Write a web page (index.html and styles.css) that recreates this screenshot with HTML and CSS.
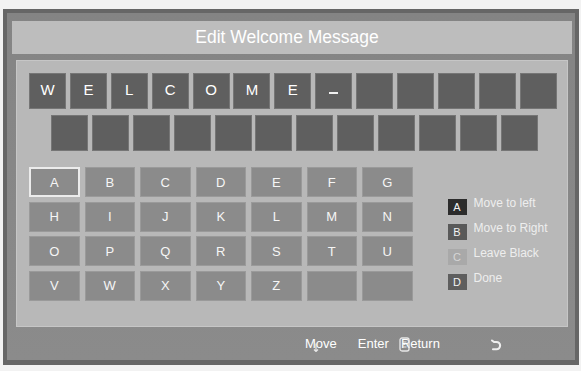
FILE: index.html
```html
<!DOCTYPE html>
<html>
<head>
<meta charset="utf-8">
<link rel="stylesheet" href="styles.css">
</head>
<body>
<div class="frame">
  <div class="title">Edit Welcome Message</div>
  <div class="panel">
    <div class="slots slots-1">
      <div class="slot">W</div><div class="slot">E</div><div class="slot">L</div><div class="slot">C</div><div class="slot">O</div><div class="slot">M</div><div class="slot">E</div><div class="slot"><span class="cursor"></span></div><div class="slot"></div><div class="slot"></div><div class="slot"></div><div class="slot"></div><div class="slot"></div>
    </div>
    <div class="slots slots-2">
      <div class="slot"></div><div class="slot"></div><div class="slot"></div><div class="slot"></div><div class="slot"></div><div class="slot"></div><div class="slot"></div><div class="slot"></div><div class="slot"></div><div class="slot"></div><div class="slot"></div><div class="slot"></div>
    </div>
    <div class="lower">
      <div class="keys">
        <div class="key selected">A</div><div class="key">B</div><div class="key">C</div><div class="key">D</div><div class="key">E</div><div class="key">F</div><div class="key">G</div>
        <div class="key">H</div><div class="key">I</div><div class="key">J</div><div class="key">K</div><div class="key">L</div><div class="key">M</div><div class="key">N</div>
        <div class="key">O</div><div class="key">P</div><div class="key">Q</div><div class="key">R</div><div class="key">S</div><div class="key">T</div><div class="key">U</div>
        <div class="key">V</div><div class="key">W</div><div class="key">X</div><div class="key">Y</div><div class="key">Z</div><div class="key"></div><div class="key"></div>
      </div>
      <div class="legend">
        <div class="legend-row"><span class="badge badge-a">A</span><span class="legend-text">Move to left</span></div>
        <div class="legend-row"><span class="badge badge-b">B</span><span class="legend-text">Move to Right</span></div>
        <div class="legend-row"><span class="badge badge-c">C</span><span class="legend-text">Leave Black</span></div>
        <div class="legend-row"><span class="badge badge-d">D</span><span class="legend-text">Done</span></div>
      </div>
    </div>
  </div>
  <div class="footer">
    <span class="hint hint-move">Move<svg class="ov ov-move" width="6" height="9" viewBox="0 0 6 9"><path d="M3 0.5 V8.5 M1 6.5 L3 8.5 L5 6.5" fill="none" stroke="#e8e8e8" stroke-width="1.2"/></svg></span>
    <span class="hint hint-enter">Enter</span>
    <span class="hint hint-return">Return<svg class="ov ov-return" width="11" height="15" viewBox="0 0 11 15"><rect x="1" y="1" width="9" height="13" rx="2" fill="none" stroke="#e8e8e8" stroke-width="1.3"/><path d="M3.5 5 H7.5 M3.5 7.5 H6.5 M3.5 10 H7.5" stroke="#e8e8e8" stroke-width="1.1"/></svg></span>
    <svg class="back" width="12" height="13" viewBox="0 0 12 13"><path d="M2 2.5 L4 4 H6.5 A3.6 3.6 0 0 1 6.5 11.2 H3" fill="none" stroke="#eeeeee" stroke-width="2.1" stroke-linecap="round" stroke-linejoin="round"/></svg>
  </div>
</div>
</body>
</html>
```

FILE: styles.css
```css
html, body {
  margin: 0;
  padding: 0;
  background: #f2f2f2;
  font-family: "Liberation Sans", Arial, sans-serif;
}

body {
  width: 581px;
  height: 371px;
  overflow: hidden;
}

.frame {
  margin: 9px 0 0 3px;
  width: 576px;
  height: 356px;
  box-sizing: border-box;
  border: 4px solid #666666;
  border-bottom-width: 5px;
  background: linear-gradient(to bottom, #848484, #8b8b8b);
  padding: 8px 3px 0 5px;
  display: flex;
  flex-direction: column;
}

.title {
  height: 33px;
  background: #bdbdbd;
  color: #ffffff;
  font-size: 17.5px;
  display: flex;
  align-items: center;
  justify-content: center;
  padding-right: 10px;
}

.panel {
  margin: 6px 4px 0 4px;
  height: 267px;
  box-sizing: border-box;
  border: 1px solid #c6c6c6;
  background: #b8b8b8;
  padding: 12px 0 0 12px;
}

.slots {
  display: flex;
  gap: 3.9px;
}

.slots-2 {
  margin: 6px 0 0 22px;
}

.slot {
  width: 37px;
  height: 36px;
  box-sizing: border-box;
  background: #5f5f5f;
  border: 1px solid #767676;
  color: #ffffff;
  font-size: 15px;
  display: flex;
  align-items: center;
  justify-content: center;
  padding-bottom: 3px;
}

.cursor {
  display: block;
  width: 9px;
  height: 2px;
  background: #f0f0f0;
  margin-top: 6px;
}

.lower {
  display: flex;
  margin-top: 16px;
}

.keys {
  display: grid;
  grid-template-columns: repeat(7, 50.5px);
  grid-auto-rows: 30px;
  column-gap: 5px;
  row-gap: 4.5px;
}

.key {
  box-sizing: border-box;
  background: #8b8b8b;
  border: 1px solid #9a9a9a;
  color: #f6f6f6;
  font-size: 13px;
  display: flex;
  align-items: center;
  justify-content: center;
}

.key.selected {
  border: 2px solid #ececec;
}

.legend {
  margin: 32px 0 0 35px;
  display: flex;
  flex-direction: column;
  gap: 9px;
}

.legend-row {
  display: flex;
  align-items: flex-start;
  height: 16px;
}

.badge {
  width: 19px;
  height: 16px;
  display: flex;
  align-items: center;
  justify-content: center;
  font-size: 11px;
  color: #f2f2f2;
}

.badge-a { background: #2c2c2c; }
.badge-b { background: #595959; }
.badge-c { background: #a9a9a9; color: #d6d6d6; }
.badge-d { background: #5e5e5e; }

.legend-text {
  margin-left: 7px;
  margin-top: -3px;
  font-size: 12px;
  color: #eeeeee;
}

.footer {
  height: 33px;
  display: flex;
  align-items: center;
  padding-left: 293px;
  color: #ffffff;
  font-size: 13px;
}

.hint {
  position: relative;
}

.hint-enter { margin-left: 21px; }
.hint-return { margin-left: 12px; }

.ov {
  position: absolute;
}

.ov-move {
  left: 8px;
  top: 7px;
}

.ov-return {
  left: -2px;
  top: 1px;
}

.back {
  margin-left: 50px;
  margin-top: 2px;
}
```
